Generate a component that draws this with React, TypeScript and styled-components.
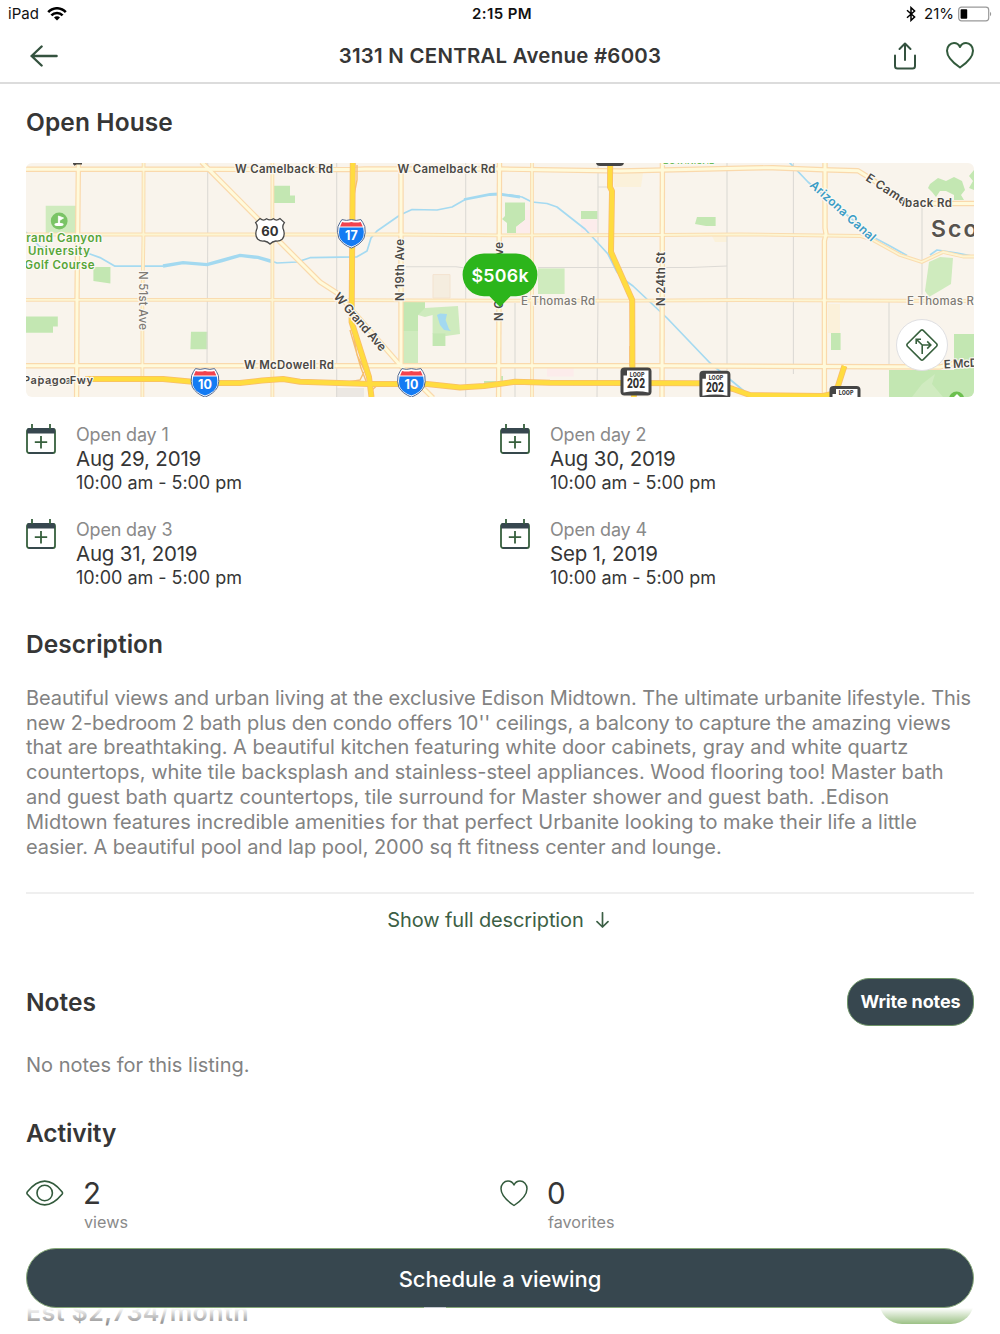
import React from 'react'
import styled, { createGlobalStyle } from 'styled-components'

const GlobalStyle = createGlobalStyle`
    * {
        box-sizing: border-box;
    }

    body {
        margin: 0;
        background: #fff;
        font-family: Inter, 'Liberation Sans', sans-serif;
        color: #363636;
    }
`

const Page = styled.div`
    position: relative;
    display: flex;
    flex-direction: column;
    width: 1000px;
    height: 1334px;
    overflow: hidden;
    background: #fff;
`

const StatusBar = styled.div`
    display: grid;
    grid-template-columns: 1fr auto 1fr;
    align-items: center;
    height: 27px;
    padding: 0 8px;
    color: #111;
    font-size: 15px;
`

const StatusGroup = styled.div<{ $end?: boolean }>`
    display: flex;
    align-items: center;
    justify-content: ${(props) => (props.$end ? 'flex-end' : 'flex-start')};
    gap: 8px;
`

const Battery = styled.span`
    display: flex;
    align-items: center;
    gap: 4px;
`

const Clock = styled.div`
    font-weight: 600;
    letter-spacing: 0.4px;
    padding-left: 4px;
`

const Header = styled.header`
    display: grid;
    grid-template-columns: 1fr auto 1fr;
    align-items: center;
    height: 57px;
    padding: 2px 26px 0 30px;
    border-bottom: 2px solid #dcdcdc;
`

const Title = styled.h1`
    margin: 0;
    font-size: 20.4px;
    font-weight: 600;
    letter-spacing: 0.27px;
    white-space: nowrap;
    padding-right: 4px;
`

const HeaderActions = styled.div`
    display: flex;
    justify-content: flex-end;
    align-items: center;
    gap: 30px;
`

const Content = styled.main`
    display: flex;
    flex-direction: column;
    padding: 0 26px;
`

const SectionTitle = styled.h2<{ $top: number; $spacing?: number }>`
    margin: ${(props) => props.$top}px 0 0;
    font-size: 24.5px;
    line-height: 30px;
    font-weight: 600;
    letter-spacing: ${(props) => props.$spacing || 0}px;
`

const MapBox = styled.div`
    position: relative;
    height: 234px;
    margin-top: 26px;
    border-radius: 6px;
    overflow: hidden;

    > svg {
        display: block;
    }
`

const DirectionsButton = styled.button`
    position: absolute;
    right: 26px;
    bottom: 26px;
    display: flex;
    align-items: center;
    justify-content: center;
    width: 52px;
    height: 52px;
    padding: 0;
    border: 1px solid #dfdfe2;
    border-radius: 50%;
    background: #fff;
`

const Days = styled.div`
    display: grid;
    grid-template-columns: 1fr 1fr;
    row-gap: 23.7px;
    margin-top: 25.7px;
`

const Day = styled.div`
    display: flex;
    gap: 19px;
    white-space: nowrap;
`

const DayLabel = styled.div`
    color: #8a8a8a;
    font-size: 18px;
    line-height: 24px;
    letter-spacing: -0.18px;
`

const DayDate = styled.div`
    font-size: 20.5px;
    line-height: 24px;
    letter-spacing: -0.2px;
`

const DayTime = styled.div`
    font-size: 18px;
    line-height: 24px;
    letter-spacing: -0.04px;
`

const Description = styled.p`
    margin: 27px 0 0;
    color: #828282;
    font-size: 20px;
    line-height: 24.85px;
    white-space: nowrap;
`

const Line = styled.span<{ $spacing: number }>`
    display: block;
    letter-spacing: ${(props) => props.$spacing}px;
`

const ShowMore = styled.button`
    display: flex;
    align-items: center;
    justify-content: center;
    gap: 12px;
    height: 52px;
    margin-top: 32px;
    padding: 2px 4px 0 0;
    border: none;
    border-top: 2px solid #efefef;
    background: none;
    color: #3c5f45;
    font: inherit;
    font-size: 20px;
    letter-spacing: -0.12px;
`

const NotesHead = styled.div`
    display: flex;
    align-items: center;
    justify-content: space-between;
    margin-top: 34.3px;
`

const NotesButton = styled.button`
    width: 127px;
    height: 48px;
    padding: 0;
    border: 1px solid #6f9568;
    border-radius: 22px;
    background: #37474f;
    color: #fff;
    font: inherit;
    font-size: 18px;
    font-weight: 700;
    letter-spacing: -0.12px;
`

const Empty = styled.p`
    margin: 27px 0 0;
    color: #828282;
    font-size: 20px;
    line-height: 24px;
`

const Stats = styled.div`
    display: grid;
    grid-template-columns: 1fr 1fr;
    margin-top: 28px;
`

const Stat = styled.div`
    display: flex;
    gap: 20px;

    svg {
        margin-top: 4px;
    }
`

const StatValue = styled.div`
    font-size: 29.5px;
    line-height: 34px;
    margin-left: -1px;
`

const StatLabel = styled.div`
    color: #8a8a8a;
    font-size: 16.2px;
    line-height: 24px;
`

const Estimate = styled.div`
    position: absolute;
    left: 26px;
    right: 26px;
    top: 1276px;
    display: flex;
    justify-content: space-between;
`

const EstimateText = styled.div`
    padding-top: 21px;
    font-size: 25px;
    line-height: 30px;
    font-weight: 600;
    letter-spacing: 0.4px;
`

const EstimateButton = styled.div`
    width: 95px;
    height: 48px;
    border-radius: 23px;
    background: #4f9127;
`

const Footer = styled.div`
    position: absolute;
    left: 0;
    right: 0;
    bottom: 0;
    height: 86px;
    padding: 0 26px;
    background: linear-gradient(to bottom, #fff 0, #fff 60px, rgba(255, 255, 255, 0.44) 76px);
`

const ScheduleButton = styled.button`
    position: relative;
    display: block;
    width: 100%;
    height: 60px;
    padding: 1px 0 0 0;
    border: 1px solid #86a878;
    border-radius: 30px;
    background: #37474f;
    color: #fff;
    font: inherit;
    font-size: 22px;
    font-weight: 500;
    letter-spacing: -0.08px;

    /* sliver of the content that shows at the lower edge */
    &::after {
        content: '';
        position: absolute;
        left: 397px;
        bottom: -1px;
        width: 22px;
        height: 1.5px;
        background: #c3c9cc;
    }
`

const ROAD_LABEL = '#4b4945'

const HEART = 'M14 25.5 C8 21.5 1 15.5 1 8.8 C1 4.4 4.2 1 8 1 C10.8 1 12.9 2.6 14 5 C15.1 2.6 17.2 1 20 1 C23.8 1 27 4.4 27 8.8 C27 15.5 20 21.5 14 25.5 Z'

const Heart = ({ width = 2 }: { width?: number }) => (
    <svg width="28" height="27" viewBox="0 0 28 27" fill="none" stroke="#325a3c" strokeWidth={width} strokeLinejoin="round">
        <path d={HEART} />
    </svg>
)

const WifiIcon = () => (
    <svg width="20" height="14" viewBox="0 0 20 14" fill="none" stroke="#000" strokeWidth="2.5">
        <path d="M1.2 5.2 C6 -0.1 14 -0.1 18.8 5.2" />
        <path d="M4.4 8.4 C7.4 5.1 12.6 5.1 15.6 8.4" />
        <path d="M10 13.4 L7 10.4 C8.6 8.8 11.4 8.8 13 10.4 Z" fill="#000" stroke="none" />
    </svg>
)

const BluetoothIcon = () => (
    <svg width="10" height="16" viewBox="0 0 10 16" fill="none" stroke="#000" strokeWidth="1.5">
        <path d="M1 4.2 L8.6 11 L5 14.4 V1.6 L8.6 5 L1 11.8" />
    </svg>
)

const BatteryIcon = () => (
    <svg width="34" height="16" viewBox="0 0 34 16">
        <rect x="0.7" y="1.2" width="30" height="13.6" rx="2.8" fill="#fff" stroke="#999" strokeWidth="1.2" />
        <rect x="2.6" y="3.2" width="6.6" height="9.6" rx="0.8" fill="#000" />
        <path d="M32 5.8 C33.6 6.6 33.6 9.4 32 10.2 Z" fill="#999" />
    </svg>
)

const BackIcon = () => (
    <svg width="29" height="24" viewBox="0 0 29 24" fill="none" stroke="#34523f" strokeWidth="2.4" strokeLinecap="round" strokeLinejoin="round">
        <path d="M1.6 12 H26.6 M11.6 2.5 L1.6 12 L11.6 21.5" />
    </svg>
)

const ShareIcon = () => (
    <svg width="22" height="28" viewBox="0 0 22 28" fill="none" stroke="#34523f" strokeWidth="2" strokeLinecap="round" strokeLinejoin="round">
        <path d="M1 13.5 V24 Q1 26.5 3.5 26.5 H18.5 Q21 26.5 21 24 V13.5" />
        <path d="M11 18 V2 M5.5 7 L11 1.5 L16.5 7" />
    </svg>
)

const CalendarIcon = () => (
    <svg width="31" height="32" viewBox="0 0 31 32" fill="none">
        <rect x="1" y="6" width="28" height="24" rx="2" stroke="#37603d" strokeWidth="1.8" />
        <path d="M1 10.6 V7 Q1 5 3 5 H27 Q29 5 29 7 V10.6 Z" fill="#37474f" />
        <path d="M3 30 H27" stroke="#37474f" strokeWidth="1.8" />
        <path d="M6 1 V6 M24 1 V6" stroke="#37603d" strokeWidth="1.8" />
        <path d="M15 13 V25.4 M8.8 19.2 H21.2" stroke="#37603d" strokeWidth="1.8" />
    </svg>
)

const EyeIcon = () => (
    <svg width="38" height="26" viewBox="0 0 38 26" fill="none" stroke="#325a3c" strokeWidth="1.6">
        <path d="M1.4 11.7 Q18.7 -9.5 36 11.7 Q37 13 36 14.3 Q18.7 35.5 1.4 14.3 Q0.4 13 1.4 11.7 Z" />
        <circle cx="18.7" cy="13" r="7.7" />
    </svg>
)

const DownIcon = () => (
    <svg width="13" height="16" viewBox="0 0 13 16" fill="none" stroke="#3c5f45" strokeWidth="1.7" strokeLinecap="round" strokeLinejoin="round">
        <path d="M6.5 0.8 V15 M1 9.6 L6.5 15 L12 9.6" />
    </svg>
)

const DirectionsIcon = () => (
    <svg width="32" height="32" viewBox="0 0 32 32" fill="none" stroke="#37603d" strokeWidth="1.6">
        <path d="M14.8 1.4 Q16 0.4 17.2 1.4 L30.6 14.8 Q31.6 16 30.6 17.2 L17.2 30.6 Q16 31.6 14.8 30.6 L1.4 17.2 Q0.4 16 1.4 14.8 Z" />
        <path d="M16.2 25 V16 H24.5 M21.2 12.4 L24.8 16 L21.2 19.6 M16.2 16 L10.4 10.4 M10.2 15 V10.2 H15" />
    </svg>
)

const Interstate = ({ x, y, label }: { x: number; y: number; label: string }) => (
    <g transform={`translate(${x} ${y})`}>
        <path
            d="M-9.5 -14 Q-5 -12.4 0 -14 Q5 -12.4 9.5 -14 Q11.5 -11.5 13.4 -7 Q14.6 -1 12.6 4.5 Q9 11 0 14.5 Q-9 11 -12.6 4.5 Q-14.6 -1 -13.4 -7 Q-11.5 -11.5 -9.5 -14 Z"
            fill="#fff"
            stroke="#53688f"
            strokeWidth="1"
        />
        <path d="M-11.8 -6 H11.8 Q14 4 8.5 8.3 Q4.5 11.5 0 12.8 Q-4.5 11.5 -8.5 8.3 Q-14 4 -11.8 -6 Z" fill="#147bf3" />
        <path d="M-11.3 -7 L-9.3 -11.6 Q-5 -10.4 0 -11.6 Q5 -10.4 9.3 -11.6 L11.3 -7 Z" fill="#f2434f" />
        <text x="0" y="6.2" textAnchor="middle" fontSize="12.5" fontWeight="700" fill="#fff">{label}</text>
    </g>
)

const Loop = ({ x, y }: { x: number; y: number }) => (
    <g transform={`translate(${x} ${y})`}>
        <rect width="31" height="28" rx="4" fill="#454545" />
        <path d="M6.5 3 H28 V25 Q17 22.4 3 25 V8 H6.5 Z" fill="#fff" />
        <text x="16.6" y="9.4" textAnchor="middle" fontSize="6.8" fontWeight="800" textLength="14.6" lengthAdjust="spacingAndGlyphs" fill="#454545">LOOP</text>
        <text x="15.5" y="20.8" textAnchor="middle" fontSize="12.8" fontWeight="800" textLength="18" lengthAdjust="spacingAndGlyphs" fill="#333">202</text>
    </g>
)

type LabelProps = {
    x: number
    y: number
    width: number
    text: string
    rotate?: number
    size?: number
    color?: string
    weight?: number
}

const MapLabel = ({ x, y, width, text, rotate = 0, size = 11.5, color = ROAD_LABEL, weight = 600 }: LabelProps) => (
    <text
        transform={`translate(${x} ${y}) rotate(${rotate})`}
        textLength={width}
        fontSize={size}
        fontWeight={weight}
        fill={color}
        stroke="#fbf8f2"
        strokeWidth="2.4"
        strokeLinejoin="round"
        paintOrder="stroke"
    >
        {text}
    </text>
)

const MINOR_ROADS = [
    'M207.7 163 V240 L207 364',
    'M336.7 163 V397',
    'M465.7 163 V397',
    'M406 266.7 H456 L465 268',
    'M515 303 V397',
    'M598 163 V300 L597 397',
    'M598 187 H610',
    'M538 267.5 H690 L727 266',
    'M727 163 V397',
    'M793.4 163 V374',
    'M922 203 V300',
    'M889 300 V366',
]

const ROADS = [
    'M26 234.5 H142 L260 234.5 H400 L500 235.4 L660 235 L740 234.3 L860 236 L873 240 L900 255 L921.7 262 L943 252 L963 256.5 H974',
    'M26 299.8 H260 L500 300.6 H640 L740 300 L974 301',
    'M143.6 163 L143.4 240 L142.4 300 V397',
    'M272.4 163 V397',
    'M532 163 V397',
]

const MAIN_ROADS = [
    'M26 169.3 H200 L350 169.6 L365 169 H500 L620 171 L750 168 L773 167.7 L823 169.7 L858 170.7 L873 180 L903 201.5 L920 203.5 H974',
    'M26 365.8 H660 L940 367 L955 363 H974',
    'M78.4 163 L77 300 L76.6 397',
    'M201.5 162 L258 219 L280 242 L320 282 L337 293 L400 365 L433 398',
    'M401 163 V365',
    'M499.5 163 L498.6 397',
    'M662.4 163 L662 397',
    'M825 163 V228 L826 234 L824.4 241 V397',
]

const HIGHWAYS = [
    'M85 379 L163 379 L206 383 L240 383 L262 380.5 L283 379 L300 381.7 L370 384 L427 384 L460 387.4 L484 386 L515 381.8 L550 382.8 L700 383.2 L716 384 L733 389 L750 395 L823 396 L832 394 L838 386 L844.4 366',
    'M352.8 163 L351.6 322 L369 377 L371.5 397',
    'M610.2 163 L610 187 L612 191 L611 252 L632.2 300 L632.4 370 L634 397',
]

const PARKS = [
    'M93.4 267 H110.4 V283.4 L93.4 281 Z',
    'M26 316.4 H57.8 V326.4 H53 V332.8 H26 Z',
    'M191 331.7 H207.6 V349.3 H190.4 Z',
    'M274 185.7 H290 V195.6 H295 V203 H274 Z',
    'M505 202.6 H525 V220 L516 227 V233 H507 V223 L502 219 L505 216 Z',
    'M581 211 H597.6 V219 H581 Z',
    'M697 217 H715.6 V226 H706 L695 224 Z',
    'M831 333 H840.6 V350 H831 Z',
    'M432.6 333.4 H445.4 V346 H432.6 Z',
    'M403 301 H425 V308 L418 315 V331 H403 Z',
    'M889 370 H954 V334 H974 V397 H889 Z',
    'M499 376 H503 V386 H484 V381 H499 Z',
    'M930 184 L938 178 L946 181 L954 177 L962 181 L965 190 L961 195 L964 200 H954 V195 L946 191 H940 L936 197 L932 192 L928 188 Z',
    'M974 170 L969 176 L973 181 L969 188 L974 190 Z',
]

const LIGHT_PARKS = [
    'M45.7 205.7 H76 V234 H45.7 Z',
    'M403 301 H425 V308 L458 306 L460 334 L446 336 L432.6 334 V315 L425 317 L418 315 V363 H403 Z',
    'M538 268.4 H564.6 V294 H538 Z',
    'M929 262 L940 257 L953 258 L951 284 L941 290 L929 297 L925 291 Z',
    'M912 397 L922 384 L935 374 L932 384 L943 397 Z',
]

const AreaMap = () => (
    <svg width="948" height="234" viewBox="26 163 948 234">
        <rect x="26" y="163" width="948" height="234" fill="#f9f4ec" />
        {LIGHT_PARKS.slice(0, 4).map((d) => <path key={d} d={d} fill="#cfebbe" />)}
        {PARKS.map((d) => <path key={d} d={d} fill="#c3e7b2" />)}
        <path d={LIGHT_PARKS[4]} fill="#d0ebc0" />
        <path d="M614 173 H643 L641 187 H614 Z M712 236 H727 V242 H715 Z M828 304 H840 V333 H828 Z" fill="#fbf1da" />
        <path d="M433 274.6 H450 V298 H433 Z" fill="#f5eddf" stroke="#f3e3d0" />
        <path d="M516 227 L525 220 V210 H530 V233 H516 Z M581 219.6 H597 V232 H581 Z M547 368 H573.6 V376.6 H547 Z" fill="#fceceb" />
        <path d="M336 388 H364 V397 H336 Z" fill="#ece8e3" />
        <path d="M437 315 L440 313.5 L447 314 L445.6 320 L449 329 L451 331 L444 330 L440 325 Z" fill="#a3d9f0" />

        <g fill="none" stroke="#dddad5" strokeWidth="1.1">
            {MINOR_ROADS.map((d) => <path key={d} d={d} />)}
        </g>

        <g fill="none" stroke="#a5daf1" strokeWidth="1.7" strokeLinejoin="round">
            <path d="M26 232 L40 247 L70 252 L90 254 L100 257.6 L115 266.2 H163" />
            <path d="M270 260.5 L277 263 L297 262 L310 257.7 L357 256.8 L367 251 L371 238 L377 231 L400 215 L412 209.5 L437 210 L452 207 L466 199" />
            <path d="M510 195 L522 197 L532 202 L547 203.5 L557 207 L585 229 L608 254 L617 272 L626 281 L633 286 L667 318 L710 363 L744 391" />
            <path d="M789 162 L808 182 L873 237 L890 246 L907 255.5 M930 255 L937 250 L957 253 L972 256" />
        </g>
        <path d="M163 266 L183 262.6 L207 264.6 L222 260.5 L240 255.4 L258 257.4 L272 261.5" fill="none" stroke="#a3d9f0" strokeWidth="3.4" />
        <path d="M464 199.5 L490 194.5 L499 194 L520 197" fill="none" stroke="#a3d9f0" strokeWidth="2.8" />

        <g fill="none" strokeLinejoin="round">
            {ROADS.map((d) => <path key={d} d={d} stroke="#fadcb0" strokeWidth="3.8" />)}
            {MAIN_ROADS.map((d) => <path key={d} d={d} stroke="#fad9ac" strokeWidth="5.4" />)}
            {ROADS.map((d) => <path key={d} d={d} stroke="#fdf5d2" strokeWidth="1.8" />)}
            {MAIN_ROADS.map((d) => <path key={d} d={d} stroke="#fffadb" strokeWidth="3" />)}
            <path d="M357 165 V180 L354 195 M352 325 L357 355 L368 377 M350 330 L361 368 L366 381 M348 382 L360 380 L364 372 M372 390 L381 382 L402 384 M630 346 V366" stroke="#f5be70" strokeWidth="1.4" />
            {HIGHWAYS.map((d) => <path key={d} d={d} stroke="#f9be6a" strokeWidth="6" />)}
            {HIGHWAYS.map((d) => <path key={d} d={d} stroke="#ffdc3f" strokeWidth="4.4" />)}
        </g>

        <rect x="596" y="152" width="28" height="14" rx="4" fill="#454545" />
        <path d="M73 163.6 H82 M79 162 L74 165" stroke={ROAD_LABEL} strokeWidth="1.6" />
        <MapLabel x={663} y={164.2} width={51} text="BOTANICAL" size={9} color="#6dbb5a" />

        <MapLabel x={235} y={173} width={98} text="W Camelback Rd" />
        <MapLabel x={397.5} y={172.6} width={98} text="W Camelback Rd" />
        <MapLabel x={244} y={369} width={90} text="W McDowell Rd" />
        <MapLabel x={521} y={304.6} width={74} text="E Thomas Rd" color="#7e7a74" weight={500} />
        <MapLabel x={907} y={304.6} width={74} text="E Thomas Rd" color="#7e7a74" weight={500} />
        <MapLabel x={139} y={271} width={59} text="N 51st Ave" rotate={90} color="#7e7a74" weight={500} />
        <MapLabel x={404.4} y={301} width={62} text="N 19th Ave" rotate={-90} />
        <MapLabel x={665.4} y={306} width={54} text="N 24th St" rotate={-90} />
        <MapLabel x={502.6} y={321} width={79} text="N Central Ave" rotate={-90} />
        <MapLabel x={333} y={297} width={73} text="W Grand Ave" rotate={49} size={12} />
        <MapLabel x={865} y={180} width={46} text="E Came" rotate={33} size={12} />
        <MapLabel x={901} y={205.4} width={6} text="l" rotate={22} />
        <MapLabel x={905} y={206.6} width={47} text="back Rd" />
        <MapLabel x={944} y={368.4} width={62} text="E McDowell" rotate={-3} />
        <MapLabel x={809} y={186} width={84} text="Arizona Canal" rotate={42} size={12} color="#3b9dc6" />
        <MapLabel x={38} y={384} width={33} text="Laguna" size={10.5} />
        <MapLabel x={23} y={384} width={70} text="Papago Fwy" size={11} />
        <MapLabel x={931} y={237.4} width={136} text="Scottsdale" size={23} color="#57534e" />
        <MapLabel x={17} y={242} width={85} text="Grand Canyon" color="#56a538" />
        <MapLabel x={28} y={255.4} width={62} text="University" color="#56a538" />
        <MapLabel x={24.5} y={268.6} width={70} text="Golf Course" color="#56a538" />

        <circle cx="59.2" cy="221" r="8.4" fill="#7ac466" />
        <path d="M58.4 224 V216 L63.6 218 L59.6 220.4 V224" fill="#fff" stroke="#fff" strokeWidth="0.8" />
        <ellipse cx="59" cy="224.4" rx="4.6" ry="1.7" fill="#fff" />
        <circle cx="956.6" cy="399" r="7.6" fill="#6cbf4f" />
        <path d="M953 398 L957 394 L961 398 Z" fill="#fff" />

        <path
            d="M260 218.5 Q263.5 221.5 266.6 218.8 Q270 221 273.4 218.8 Q276.5 221.5 280 218.5 L284.4 222.6 Q281.8 226 283.4 229.6 Q285.4 235 282.4 239 Q279.5 241.6 275.8 241 Q272.4 241.4 270 244 Q267.6 241.4 264.2 241 Q260.5 241.6 257.6 239 Q254.6 235 256.6 229.6 Q258.2 226 255.6 222.6 Z"
            fill="#fff"
            stroke="#4a4a4a"
            strokeWidth="1.3"
        />
        <text x="269.8" y="235.6" textAnchor="middle" fontSize="13" fontWeight="700" fill="#333">60</text>

        <Interstate x={351.4} y={233.6} label="17" />
        <Interstate x={205} y={382.6} label="10" />
        <Interstate x={411.4} y={382.6} label="10" />
        <Loop x={620.5} y={367.6} />
        <Loop x={699.4} y={370.8} />
        <Loop x={829.5} y={386} />

        <path d="M484 253.4 H516 A21.4 21.4 0 0 1 516 296.2 H510.5 L500 307 L489.5 296.2 H484 A21.4 21.4 0 0 1 484 253.4 Z" fill="#2cb51b" />
        <text x="500" y="281.6" textAnchor="middle" textLength="57" fontSize="17.8" fontWeight="600" fill="#fff">$506k</text>
    </svg>
)

const openDays = [
    { label: 'Open day 1', date: 'Aug 29, 2019' },
    { label: 'Open day 2', date: 'Aug 30, 2019' },
    { label: 'Open day 3', date: 'Aug 31, 2019' },
    { label: 'Open day 4', date: 'Sep 1, 2019' },
]

const descriptionLines = [
    { text: 'Beautiful views and urban living at the exclusive Edison Midtown. The ultimate urbanite lifestyle. This', spacing: -0.068 },
    { text: "new 2-bedroom 2 bath plus den condo offers 10'' ceilings, a balcony to capture the amazing views", spacing: -0.07 },
    { text: 'that are breathtaking. A beautiful kitchen featuring white door cabinets, gray and white quartz', spacing: -0.02 },
    { text: 'countertops, white tile backsplash and stainless-steel appliances. Wood flooring too! Master bath', spacing: -0.02 },
    { text: 'and guest bath quartz countertops, tile surround for Master shower and guest bath. .Edison', spacing: 0 },
    { text: 'Midtown features incredible amenities for that perfect Urbanite looking to make their life a little', spacing: -0.01 },
    { text: 'easier. A beautiful pool and lap pool, 2000 sq ft fitness center and lounge.', spacing: -0.04 },
]

const App = () => {
    return (
        <Page>
            <GlobalStyle />

            <StatusBar>
                <StatusGroup>
                    <span>iPad</span>
                    <WifiIcon />
                </StatusGroup>
                <Clock>2:15 PM</Clock>
                <StatusGroup $end>
                    <BluetoothIcon />
                    <Battery>
                        21%
                        <BatteryIcon />
                    </Battery>
                </StatusGroup>
            </StatusBar>

            <Header>
                <BackIcon />
                <Title>3131 N CENTRAL Avenue #6003</Title>
                <HeaderActions>
                    <ShareIcon />
                    <Heart />
                </HeaderActions>
            </Header>

            <Content>
                <SectionTitle $top={23} $spacing={0.1}>Open House</SectionTitle>
                <MapBox>
                    <AreaMap />
                    <DirectionsButton aria-label="Directions">
                        <DirectionsIcon />
                    </DirectionsButton>
                </MapBox>

                <Days>
                    {openDays.map((day) => (
                        <Day key={day.label}>
                            <CalendarIcon />
                            <div>
                                <DayLabel>{day.label}</DayLabel>
                                <DayDate>{day.date}</DayDate>
                                <DayTime>10:00 am - 5:00 pm</DayTime>
                            </div>
                        </Day>
                    ))}
                </Days>

                <SectionTitle $top={38.3} $spacing={0.05}>Description</SectionTitle>
                <Description>
                    {descriptionLines.map((line) => (
                        <Line key={line.text} $spacing={line.spacing}>{line.text}</Line>
                    ))}
                </Description>
                <ShowMore>
                    Show full description
                    <DownIcon />
                </ShowMore>

                <NotesHead>
                    <SectionTitle $top={0}>Notes</SectionTitle>
                    <NotesButton>Write notes</NotesButton>
                </NotesHead>
                <Empty>No notes for this listing.</Empty>

                <SectionTitle $top={41} $spacing={-0.12}>Activity</SectionTitle>
                <Stats>
                    <Stat>
                        <EyeIcon />
                        <div>
                            <StatValue>2</StatValue>
                            <StatLabel>views</StatLabel>
                        </div>
                    </Stat>
                    <Stat>
                        <Heart width={1.5} />
                        <div>
                            <StatValue>0</StatValue>
                            <StatLabel>favorites</StatLabel>
                        </div>
                    </Stat>
                </Stats>
            </Content>

            <Estimate>
                <EstimateText>Est $2,734/month</EstimateText>
                <EstimateButton />
            </Estimate>
            <Footer>
                <ScheduleButton>Schedule a viewing</ScheduleButton>
            </Footer>
        </Page>
    )
}

export default App
